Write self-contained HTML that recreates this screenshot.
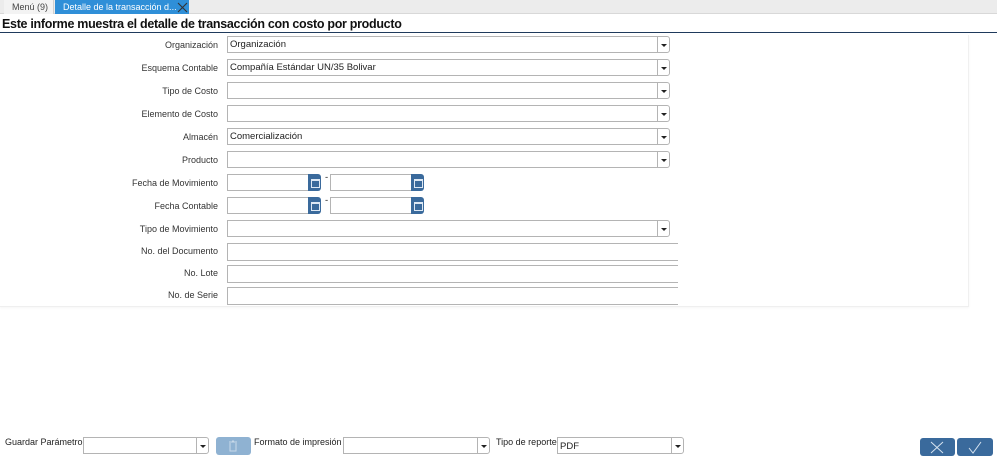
<!DOCTYPE html>
<html><head><meta charset="utf-8"><style>
*{box-sizing:border-box;margin:0;padding:0}
body{width:997px;height:456px;background:#fff;font-family:"Liberation Sans","DejaVu Sans",sans-serif;font-size:9.5px;color:#222;position:relative;overflow:hidden}
.a{position:absolute}
.tabbar{left:0;top:0;width:997px;height:14px;background:#ececec;border-bottom:1px solid #d8d8d8}
.tab1{left:4px;top:0;height:14px;width:50px;background:#f3f3f3;color:#444;padding-left:8px;line-height:14px;font-size:9px;border-right:1px solid #d0d0d0}
.tab2{left:55px;top:0;height:14px;width:134px;background:#2f8fd8;color:#fff;padding-left:8px;line-height:14px;font-size:9px}
.title{left:2px;top:17px;font-size:12.5px;font-weight:bold;letter-spacing:-0.3px;color:#111}
.uline{left:0;top:32px;width:997px;height:1px;background:#1f3a5c}
.panel{left:0;top:35px;width:969px;height:272px;border-right:1px solid #f0f0f0;border-bottom:1px solid #efefef;box-shadow:0 1px 2px rgba(0,0,0,0.04)}
.lbl{width:218px;text-align:right;font-size:9px;color:#333;left:0}
.f{border:1px solid #b4b4b4;background:#fff;height:17px;font-size:9.5px;padding-left:2px;line-height:15px;color:#222}
.dd{width:13px;height:17px;border:1px solid #b4b4b4;border-radius:0 3px 3px 0;background:#fff}
.dd:after{content:"";position:absolute;left:3px;top:7px;border-left:3px solid transparent;border-right:3px solid transparent;border-top:3px solid #222}
.cal{width:13px;height:17px;background:#3a6a9c;border-radius:0 3px 3px 0}
.cal:after{content:"";position:absolute;left:3px;top:5px;width:7px;height:6px;border:1px solid #dde8f4;border-top-width:2px}
.tf{border-top:1px solid #b4b4b4;border-bottom:1px solid #b4b4b4;border-left:1px solid #b4b4b4;height:18px;width:451px;left:227px}
.btn{background:#3a6a9c;border-radius:3px;height:18px}
</style></head><body>
<div class="a tabbar"></div>
<div class="a tab1">Menú (9)</div>
<div class="a tab2">Detalle de la transacción d...</div>
<svg class="a" style="left:177px;top:2px" width="11" height="11"><path d="M1 1L10 10M10 1L1 10" stroke="#333" stroke-width="1.1"/></svg>
<div class="a title">Este informe muestra el detalle de transacción con costo por producto</div>
<div class="a uline"></div>
<div class="a panel"></div>

<div class="a lbl" style="top:40px">Organización</div>
<div class="a f" style="left:227px;top:36px;width:431px">Organización</div><div class="a dd" style="left:657px;top:36px"></div>

<div class="a lbl" style="top:63px">Esquema Contable</div>
<div class="a f" style="left:227px;top:59px;width:431px">Compañía Estándar UN/35 Bolivar</div><div class="a dd" style="left:657px;top:59px"></div>

<div class="a lbl" style="top:86px">Tipo de Costo</div>
<div class="a f" style="left:227px;top:82px;width:431px"></div><div class="a dd" style="left:657px;top:82px"></div>

<div class="a lbl" style="top:109px">Elemento de Costo</div>
<div class="a f" style="left:227px;top:105px;width:431px"></div><div class="a dd" style="left:657px;top:105px"></div>

<div class="a lbl" style="top:132px">Almacén</div>
<div class="a f" style="left:227px;top:128px;width:431px">Comercialización</div><div class="a dd" style="left:657px;top:128px"></div>

<div class="a lbl" style="top:155px">Producto</div>
<div class="a f" style="left:227px;top:151px;width:431px"></div><div class="a dd" style="left:657px;top:151px"></div>

<div class="a lbl" style="top:178px">Fecha de Movimiento</div>
<div class="a f" style="left:227px;top:174px;width:82px"></div><div class="a cal" style="left:308px;top:174px"></div>
<div class="a" style="left:325px;top:172px">-</div>
<div class="a f" style="left:330px;top:174px;width:82px"></div><div class="a cal" style="left:411px;top:174px"></div>

<div class="a lbl" style="top:201px">Fecha Contable</div>
<div class="a f" style="left:227px;top:197px;width:82px"></div><div class="a cal" style="left:308px;top:197px"></div>
<div class="a" style="left:325px;top:195px">-</div>
<div class="a f" style="left:330px;top:197px;width:82px"></div><div class="a cal" style="left:411px;top:197px"></div>

<div class="a lbl" style="top:224px">Tipo de Movimiento</div>
<div class="a f" style="left:227px;top:220px;width:431px"></div><div class="a dd" style="left:657px;top:220px"></div>

<div class="a lbl" style="top:246px">No. del Documento</div>
<div class="a tf" style="top:243px"></div>
<div class="a lbl" style="top:268px">No. Lote</div>
<div class="a tf" style="top:265px"></div>
<div class="a lbl" style="top:290px">No. de Serie</div>
<div class="a tf" style="top:287px"></div>

<div class="a" style="left:5px;top:437px;font-size:9px">Guardar Parámetro</div>
<div class="a f" style="left:83px;top:437px;width:114px"></div><div class="a dd" style="left:196px;top:437px"></div>
<div class="a btn" style="left:216px;top:437px;width:35px;background:#8fb2d2"></div>
<svg class="a" style="left:228px;top:440px" width="10" height="12"><path d="M1 2H9M4 1H6M2 3V11H8V3" stroke="#c8d9e9" fill="none" stroke-width="1"/></svg>
<div class="a" style="left:254px;top:437px;font-size:9px">Formato de impresión</div>
<div class="a f" style="left:343px;top:437px;width:135px"></div><div class="a dd" style="left:477px;top:437px"></div>
<div class="a" style="left:496px;top:437px;font-size:9px">Tipo de reporte</div>
<div class="a f" style="left:557px;top:437px;width:115px;line-height:17px">PDF</div><div class="a dd" style="left:671px;top:437px"></div>

<div class="a btn" style="left:920px;top:438px;width:35px"></div>
<svg class="a" style="left:930px;top:441px" width="14" height="13"><path d="M1 1L13 12M13 1L1 12" stroke="#d6e3f0" stroke-width="1"/></svg>
<div class="a btn" style="left:957px;top:438px;width:36px"></div>
<svg class="a" style="left:968px;top:441px" width="14" height="13"><path d="M1 7L5 12L13 1" stroke="#d6e3f0" stroke-width="1" fill="none"/></svg>
</body></html>
